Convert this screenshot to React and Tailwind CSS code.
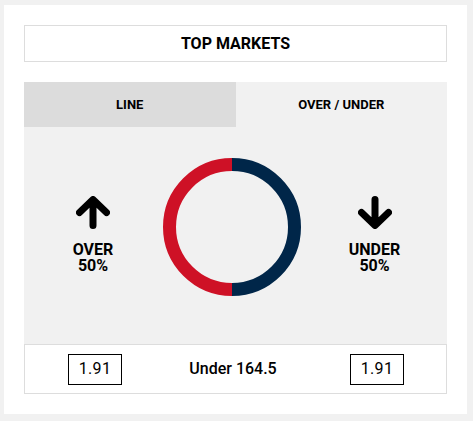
import React from 'react';

function ArrowUp({ down }) {
  return (
    <svg width="34" height="33" viewBox="0 0 34 33" className={down ? 'rotate-180' : ''}>
      <path
        d="M17 29.5V4M3.5 16.5L17 3.5L30.5 16.5"
        fill="none"
        stroke="#000"
        strokeWidth="7"
        strokeLinecap="round"
        strokeLinejoin="round"
      />
    </svg>
  );
}

function Donut() {
  return (
    <svg width="138" height="138" viewBox="0 0 138 138">
      <path d="M69 6.5 A62.5 62.5 0 0 1 69 131.5" fill="none" stroke="#002649" strokeWidth="13" />
      <path d="M69 131.5 A62.5 62.5 0 0 1 69 6.5" fill="none" stroke="#ce1126" strokeWidth="13" />
    </svg>
  );
}

function Side({ label, down }) {
  return (
    <div className="flex flex-col items-center pt-[69px]">
      <ArrowUp down={down} />
      <div className="mt-[13px] text-[16px] leading-[16px] font-bold text-black text-center">
        {label}
        <br />
        50%
      </div>
    </div>
  );
}

function Odds() {
  return (
    <div className="w-[54px] h-[31px] border border-black flex items-center justify-center text-[16px] text-black tracking-[0.3px]">
      1.91
    </div>
  );
}

export default function App() {
  return (
    <div
      className="w-[473px] h-[421px] bg-[#f1f1f1] pl-[4px] pt-[5px]"
      style={{ fontFamily: 'Roboto, "Liberation Sans", sans-serif' }}
    >
      <div className="w-[463px] h-[409px] bg-white px-[20px] pt-[20px]">
        <div className="h-[37px] border border-[#dddddd] flex items-center justify-center text-[16px] font-bold text-black">
          TOP MARKETS
        </div>

        <div className="mt-[20px] grid grid-cols-2 h-[45px] text-[13px] font-bold text-black">
          <div className="bg-[#dcdcdc] flex items-center justify-center">LINE</div>
          <div className="bg-[#f1f1f1] flex items-center justify-center">OVER / UNDER</div>
        </div>

        <div className="h-[217px] bg-[#f1f1f1] grid grid-cols-[138px_140px_145px]">
          <Side label="OVER" />
          <div className="flex justify-center pt-[31px]">
            <Donut />
          </div>
          <Side label="UNDER" down />
        </div>

        <div className="h-[50px] border border-[#dddddd] grid grid-cols-[138px_140px_145px] items-center">
          <div className="flex justify-center pl-[2px]">
            <Odds />
          </div>
          <div className="text-center text-[16px] font-medium text-black">Under 164.5</div>
          <div className="flex justify-center pl-[3px]">
            <Odds />
          </div>
        </div>
      </div>
    </div>
  );
}
